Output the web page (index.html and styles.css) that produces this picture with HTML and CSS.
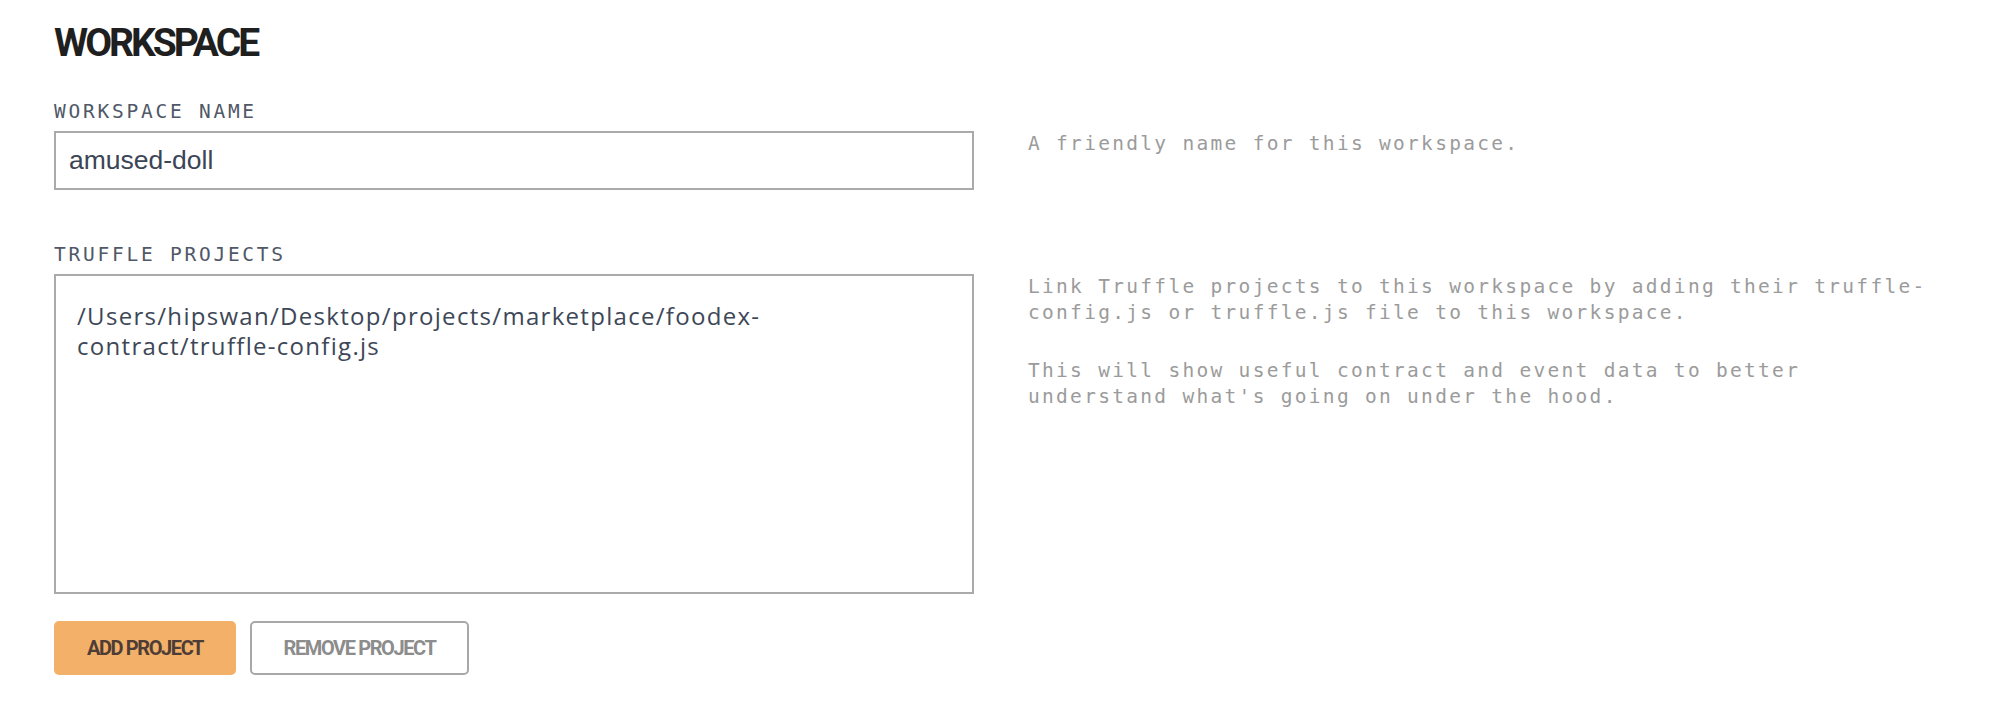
FILE: index.html
```html
<!DOCTYPE html>
<html lang="en">
<head>
<meta charset="utf-8">
<title>Workspace</title>
<link rel="stylesheet" href="styles.css">
</head>
<body>
<main class="page">
  <h1 class="title">WORKSPACE</h1>

  <section class="field">
    <label class="field-label" for="ws-name">WORKSPACE NAME</label>
    <input class="text-input" id="ws-name" type="text" value="amused-doll">
    <div class="field-help">
      <p>A friendly name for this workspace.</p>
    </div>
  </section>

  <section class="field field-projects">
    <div class="field-label">TRUFFLE PROJECTS</div>
    <div class="project-list">
      <div class="project-item">/Users/hipswan/Desktop/projects/marketplace/foodex-<br>contract/truffle-config.js</div>
    </div>
    <div class="field-help">
      <p>Link Truffle projects to this workspace by adding their truffle-config.js or truffle.js file to this workspace.</p>
      <p>This will show useful contract and event data to better understand what's going on under the hood.</p>
    </div>
  </section>

  <div class="actions">
    <button class="btn btn-primary" type="button">ADD PROJECT</button>
    <button class="btn btn-outline" type="button">REMOVE PROJECT</button>
  </div>
</main>
</body>
</html>
```

FILE: styles.css
```css
* {
  box-sizing: border-box;
}

html, body {
  margin: 0;
  padding: 0;
  background: #ffffff;
}

body {
  font-family: "Roboto", "Liberation Sans", sans-serif;
  color: #222222;
}

.page {
  padding: 20px 0 0 54px;
}

.title {
  margin: 0;
  font-family: "Roboto", sans-serif;
  font-weight: 700;
  font-size: 39px;
  line-height: 46px;
  letter-spacing: -3px;
  color: #1f1f1f;
}

.field {
  display: grid;
  grid-template-columns: 920px 905px;
  column-gap: 54px;
  margin-top: 34px;
}

.field-projects {
  margin-top: 53px;
}

.field-label {
  grid-column: 1;
  grid-row: 1;
  display: block;
  margin-bottom: 8px;
  font-family: "DejaVu Sans Mono", "Liberation Mono", monospace;
  font-size: 19.5px;
  line-height: 23px;
  letter-spacing: 2.75px;
  color: #505867;
}

.text-input {
  grid-column: 1;
  grid-row: 2;
  display: block;
  width: 920px;
  height: 59px;
  margin: 0;
  padding: 0 13px;
  border: 2px solid #aaaaaa;
  border-radius: 0;
  outline: none;
  background: #ffffff;
  font-family: "Liberation Sans", Arial, sans-serif;
  font-size: 26.5px;
  color: #3b4555;
}

.project-list {
  grid-column: 1;
  grid-row: 2;
  height: 320px;
  padding: 25px 21px;
  border: 2px solid #aaaaaa;
  background: #ffffff;
}

.project-item {
  font-family: "Open Sans", "Noto Sans", sans-serif;
  font-size: 24px;
  line-height: 30px;
  letter-spacing: 1.3px;
  color: #3d4757;
}

.field-help {
  grid-column: 2;
  grid-row: 2;
  font-family: "DejaVu Sans Mono", "Liberation Mono", monospace;
  font-size: 19.5px;
  line-height: 26px;
  letter-spacing: 2.3px;
  color: #9b9b9b;
}

.field-help p {
  margin: 0;
}

.field-help p + p {
  margin-top: 32px;
}

.actions {
  display: flex;
  gap: 14px;
  margin-top: 27px;
}

.btn {
  height: 54px;
  padding: 0;
  border-radius: 5px;
  font-family: "Roboto", sans-serif;
  font-weight: 700;
  font-size: 20px;
  letter-spacing: -1.4px;
  white-space: nowrap;
  text-align: center;
  cursor: pointer;
}

.btn-primary {
  width: 182px;
  border: none;
  background: #f2b068;
  color: #4e3d36;
}

.btn-outline {
  width: 219px;
  border: 2px solid #a8a8a8;
  background: #ffffff;
  color: #8c8c8c;
}
```
